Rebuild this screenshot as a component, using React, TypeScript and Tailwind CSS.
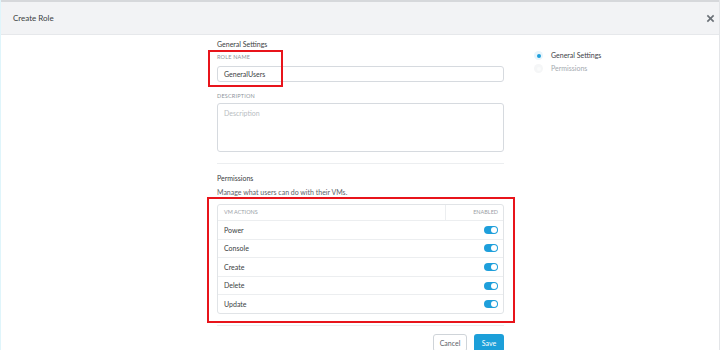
import React from "react";

const actions = ["Power", "Console", "Create", "Delete", "Update"];

function Toggle() {
  return (
    <div className="w-[14px] h-[8px] rounded-full bg-[#1e9fdb] relative">
      <div className="absolute right-[1px] top-[1px] w-[6px] h-[6px] rounded-full bg-white" />
    </div>
  );
}

export default function App() {
  return (
    <div
      className="w-[720px] h-[350px] bg-white overflow-hidden relative border-l border-l-[#dff5fb] border-r border-r-[#e3e5e8] text-[#3a3e42]"
      style={{ fontFamily: "Lato, 'Open Sans', sans-serif" }}
    >
      <header className="h-[35px] bg-[#f2f3f5] border-t-2 border-t-[#d6d8db] border-b border-b-[#e6e8eb] flex items-center justify-between pl-[12px] pr-[4px]">
        <span className="text-[8px]">Create Role</span>
        <svg width="9" height="9" viewBox="0 0 10 10" className="text-[#6b7177]">
          <path d="M1.5 1.5 L8.5 8.5 M8.5 1.5 L1.5 8.5" stroke="currentColor" strokeWidth="1.8" />
        </svg>
      </header>

      <div className="flex">
        <div className="ml-[216px] w-[287px] pt-[4px]">
          <div className="h-[10px] leading-[10px] text-[7px]">General Settings</div>
          <div className="mt-[4px] h-[8px] leading-[8px] text-[5.5px] text-[#8e959c] uppercase tracking-[0.2px]">Role Name</div>
          <div className="mt-[5px] h-[16px] border border-[#d6dadf] rounded-[3px] flex items-center px-[6px] text-[7px]">
            GeneralUsers
          </div>
          <div className="mt-[10px] h-[8px] leading-[8px] text-[5.5px] text-[#8e959c] uppercase tracking-[0.2px]">Description</div>
          <div className="mt-[3px] h-[49px] border border-[#d6dadf] rounded-[3px] px-[6px] pt-[4px] text-[7px] text-[#b8bdc2]">
            Description
          </div>
          <div className="mt-[11px] border-t border-[#eceef0]" />
          <div className="mt-[9px] h-[10px] leading-[10px] text-[7px]">Permissions</div>
          <div className="mt-[4px] h-[10px] leading-[10px] text-[7px] text-[#5d636a]">Manage what users can do with their VMs.</div>
          <div className="mt-[7px] border border-[#e1e4e7] rounded-[3px] h-[110px] flex flex-col">
            <div className="h-[16px] flex items-center border-b border-[#eceef0] text-[5.5px] text-[#9aa0a6] uppercase">
              <div className="flex-1 pl-[6px] h-full flex items-center border-r border-[#eceef0]">VM Actions</div>
              <div className="w-[57px] pr-[5px] text-right">Enabled</div>
            </div>
            {actions.map((a, i) => (
              <div
                key={a}
                className={`flex-1 flex items-center justify-between pl-[6px] pr-[5px] text-[7px] ${i < actions.length - 1 ? "border-b border-[#eceef0]" : ""}`}
              >
                <span>{a}</span>
                <Toggle />
              </div>
            ))}
          </div>
          <div className="mt-[11px] border-t border-[#eceef0]" />
          <div className="mt-[8px] flex justify-end gap-[7px]">
            <button className="h-[18px] w-[34px] border border-[#cfd4d9] rounded-[3px] text-[7px] text-[#5d636a] bg-white">Cancel</button>
            <button className="h-[18px] w-[30px] rounded-[3px] text-[7px] text-white bg-[#1c9fd9]">Save</button>
          </div>
        </div>

        <div className="ml-[30px] pt-[14px] text-[7px]">
          <div className="flex items-center h-[13px]">
            <div className="w-[9px] h-[9px] rounded-full bg-[#e8f5fc] flex items-center justify-center">
              <div className="w-[4px] h-[4px] rounded-full bg-[#1e9fdb]" />
            </div>
            <span className="ml-[8px] text-[#3d4247]">General Settings</span>
          </div>
          <div className="flex items-center h-[13px]">
            <div className="w-[9px] h-[9px] rounded-full bg-[#f5f6f7] flex items-center justify-center">
              <div className="w-[4px] h-[4px] rounded-full bg-[#fafbfb]" />
            </div>
            <span className="ml-[8px] text-[#a4aab0]">Permissions</span>
          </div>
        </div>
      </div>

      <div className="absolute left-[207px] top-[50px] w-[75px] h-[37px] border-2 border-[#e8141b] pointer-events-none" />
      <div className="absolute left-[206px] top-[197px] w-[308px] h-[126px] border-2 border-[#e8141b] pointer-events-none" />
    </div>
  );
}
